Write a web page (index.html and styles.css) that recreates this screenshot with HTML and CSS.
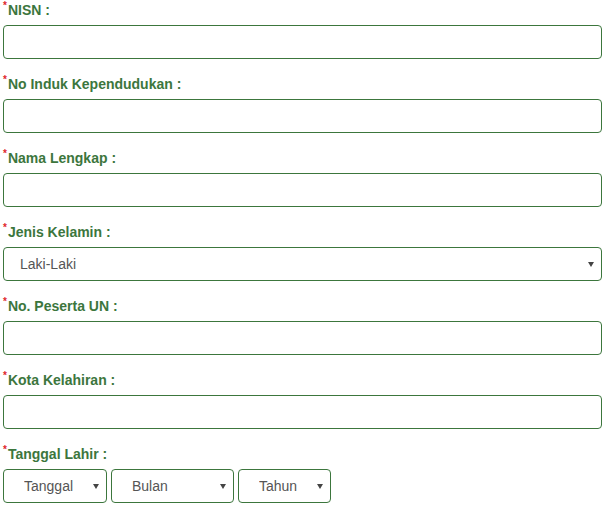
FILE: index.html
```html
<!DOCTYPE html>
<html>
<head>
<meta charset="utf-8">
<link rel="stylesheet" href="styles.css">
</head>
<body>
<form class="form">
  <div class="group">
    <label class="label"><span class="req">*</span>NISN :</label>
    <input class="control" type="text">
  </div>
  <div class="group">
    <label class="label"><span class="req">*</span>No Induk Kependudukan :</label>
    <input class="control" type="text">
  </div>
  <div class="group">
    <label class="label"><span class="req">*</span>Nama Lengkap :</label>
    <input class="control" type="text">
  </div>
  <div class="group">
    <label class="label"><span class="req">*</span>Jenis Kelamin :</label>
    <div class="select-wrap">
      <select class="control select"><option>Laki-Laki</option><option>Perempuan</option></select>
    </div>
  </div>
  <div class="group">
    <label class="label"><span class="req">*</span>No. Peserta UN :</label>
    <input class="control" type="text">
  </div>
  <div class="group">
    <label class="label"><span class="req">*</span>Kota Kelahiran :</label>
    <input class="control" type="text">
  </div>
  <div class="group">
    <label class="label"><span class="req">*</span>Tanggal Lahir :</label>
    <div class="date-row">
      <div class="select-wrap w-tgl"><select class="control select"><option>Tanggal</option></select></div>
      <div class="select-wrap w-bln"><select class="control select"><option>Bulan</option></select></div>
      <div class="select-wrap w-thn"><select class="control select"><option>Tahun</option></select></div>
    </div>
  </div>
</form>
</body>
</html>
```
FILE: styles.css
```css
html, body {
  margin: 0;
  padding: 0;
  background: #fff;
}
body {
  font-family: "Liberation Sans", Arial, sans-serif;
  font-size: 14px;
  color: #555;
}
.form {
  padding: 0 3px;
}
.group {
  display: flex;
  flex-direction: column;
  margin-bottom: 15px;
}
.label {
  display: block;
  height: 20px;
  line-height: 20px;
  margin-bottom: 5px;
  font-weight: bold;
  font-size: 14px;
  color: #3c763d;
}
.req {
  color: #e0262a;
  font-size: 10px;
  vertical-align: top;
  line-height: 11px;
  margin-right: 1px;
}
.control {
  box-sizing: border-box;
  display: block;
  width: 100%;
  height: 34px;
  margin: 0;
  padding: 6px 16px;
  border: 1px solid #3c763d;
  border-radius: 4px;
  background: #fff;
  font-family: "Liberation Sans", Arial, sans-serif;
  font-size: 14px;
  color: #555;
  outline: none;
}
.select {
  -webkit-appearance: none;
  appearance: none;
  padding-right: 24px;
}
.select-wrap {
  position: relative;
}
.select-wrap::after {
  content: "";
  position: absolute;
  right: 8px;
  top: 15px;
  width: 0;
  height: 0;
  border-left: 3.5px solid transparent;
  border-right: 3.5px solid transparent;
  border-top: 5px solid #444;
  pointer-events: none;
}
.date-row {
  display: flex;
  gap: 4px;
}
.w-tgl { width: 104px; }
.w-bln { width: 123px; }
.w-thn { width: 93px; }
.w-tgl .select, .w-bln .select, .w-thn .select {
  padding-left: 20px;
}
```
